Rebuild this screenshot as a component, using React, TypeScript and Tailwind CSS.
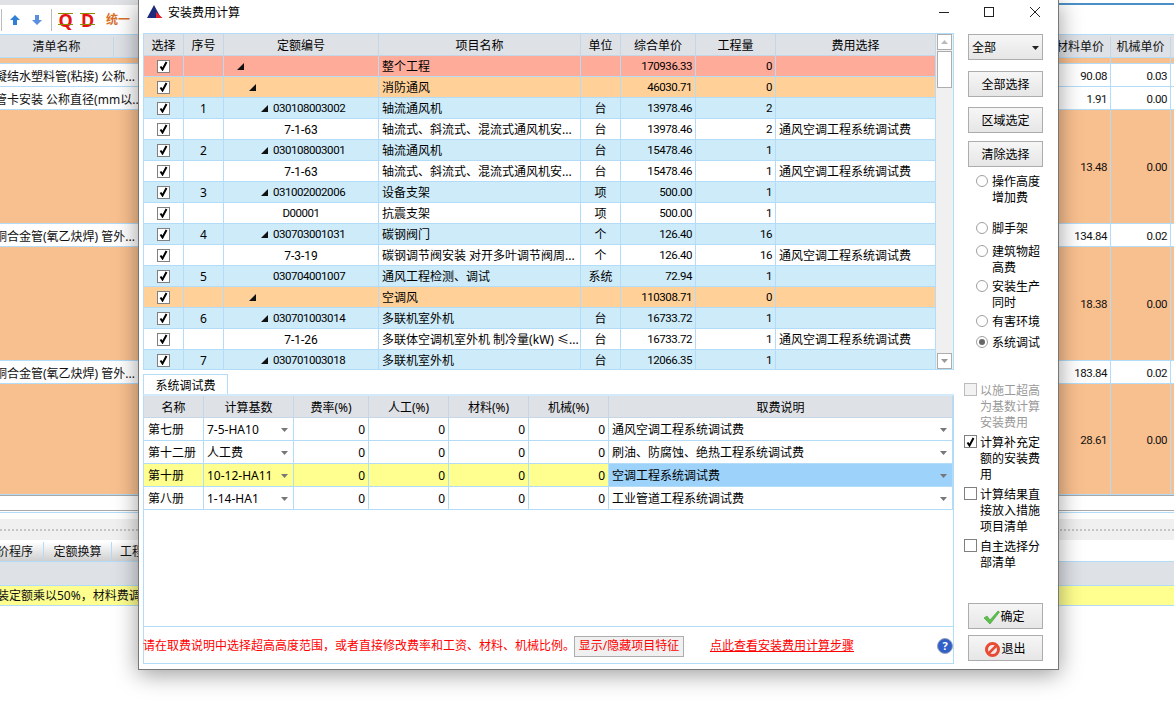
const FONT = "font-['Noto_Sans','Noto_Sans_CJK_SC',sans-serif]";
const NUM = "font-['Roboto',sans-serif] text-[11.5px] tracking-[-0.45px]";
const LEAF = "font-['Roboto',sans-serif] text-[12px]";

type TreeRow = {
  bg: string;
  no?: string;
  code?: string;
  level?: number;
  name: string;
  unit?: string;
  price: string;
  qty: string;
  fee?: string;
};

const SALMON = "bg-[#ffab9a]";
const ORANGE = "bg-[#ffd199]";
const BLUE = "bg-[#cdebf9]";
const WHITE = "bg-white";
const FEE = "通风空调工程系统调试费";

const treeRows: TreeRow[] = [
  { bg: SALMON, level: 13, name: "整个工程", price: "170936.33", qty: "0" },
  { bg: ORANGE, level: 25, name: "消防通风", price: "46030.71", qty: "0" },
  { bg: BLUE, no: "1", level: 37, code: "030108003002", name: "轴流通风机", unit: "台", price: "13978.46", qty: "2" },
  { bg: WHITE, code: "7-1-63", name: "轴流式、斜流式、混流式通风机安...", unit: "台", price: "13978.46", qty: "2", fee: FEE },
  { bg: BLUE, no: "2", level: 37, code: "030108003001", name: "轴流通风机", unit: "台", price: "15478.46", qty: "1" },
  { bg: WHITE, code: "7-1-63", name: "轴流式、斜流式、混流式通风机安...", unit: "台", price: "15478.46", qty: "1", fee: FEE },
  { bg: BLUE, no: "3", level: 37, code: "031002002006", name: "设备支架", unit: "项", price: "500.00", qty: "1" },
  { bg: WHITE, code: "D00001", name: "抗震支架", unit: "项", price: "500.00", qty: "1" },
  { bg: BLUE, no: "4", level: 37, code: "030703001031", name: "碳钢阀门", unit: "个", price: "126.40", qty: "16" },
  { bg: WHITE, code: "7-3-19", name: "碳钢调节阀安装 对开多叶调节阀周...", unit: "个", price: "126.40", qty: "16", fee: FEE },
  { bg: BLUE, no: "5", level: 0, code: "030704001007", name: "通风工程检测、调试", unit: "系统", price: "72.94", qty: "1" },
  { bg: ORANGE, level: 25, name: "空调风", price: "110308.71", qty: "0" },
  { bg: BLUE, no: "6", level: 37, code: "030701003014", name: "多联机室外机", unit: "台", price: "16733.72", qty: "1" },
  { bg: WHITE, code: "7-1-26", name: "多联体空调机室外机 制冷量(kW) ≤...", unit: "台", price: "16733.72", qty: "1", fee: FEE },
  { bg: BLUE, no: "7", level: 37, code: "030701003018", name: "多联机室外机", unit: "台", price: "12066.35", qty: "1" },
];

const feeRows = [
  { name: "第七册", base: "7-5-HA10", note: "通风空调工程系统调试费" },
  { name: "第十二册", base: "人工费", note: "刷油、防腐蚀、绝热工程系统调试费" },
  { name: "第十册", base: "10-12-HA11", note: "空调工程系统调试费", active: true },
  { name: "第八册", base: "1-14-HA1", note: "工业管道工程系统调试费" },
];

const bgRows = [
  { h: "h-[6px]", bg: "bg-[#f9c08f]" },
  { h: "h-[23px]", bg: "bg-white", name: "凝结水塑料管(粘接) 公称...", a: "90.08", b: "0.03" },
  { h: "h-[23px]", bg: "bg-white", name: "管卡安装 公称直径(mm以...", a: "1.91", b: "0.00" },
  { h: "h-[114px]", bg: "bg-[#f9c08f]", a: "13.48", b: "0.00" },
  { h: "h-[23px]", bg: "bg-white", name: "铜合金管(氧乙炔焊) 管外...", a: "134.84", b: "0.02" },
  { h: "h-[114px]", bg: "bg-[#f9c08f]", a: "18.38", b: "0.00" },
  { h: "h-[23px]", bg: "bg-white", name: "铜合金管(氧乙炔焊) 管外...", a: "183.84", b: "0.02" },
  { h: "h-[111px]", bg: "bg-[#f9c08f]", a: "28.61", b: "0.00" },
];

const Tri = () => (
  <svg width="7" height="7" viewBox="0 0 7 7" className="shrink-0">
    <polygon points="7,0 7,7 0,7" fill="#111" />
  </svg>
);

const Caret = ({ color = "#777", up = false }: { color?: string; up?: boolean }) => (
  <svg width="7" height="4" viewBox="0 0 7 4" className="shrink-0">
    <polygon points={up ? "0,4 7,4 3.5,0" : "0,0 7,0 3.5,4"} fill={color} />
  </svg>
);

const Check = ({ on = true, off = false }: { on?: boolean; off?: boolean }) => (
  <span
    className={`flex h-[13px] w-[13px] shrink-0 items-center justify-center border ${
      off ? "border-[#bcbcbc] bg-[#f2f2f2]" : "border-[#808080] bg-white"
    }`}
  >
    {on && (
      <svg width="9" height="10" viewBox="0 0 9 10">
        <path d="M1.5 5.5 L3.5 8.5 L7.5 1" fill="none" stroke="#000" strokeWidth="2" />
      </svg>
    )}
  </span>
);

const Btn = ({ children, cls = "mt-[10px]" }: { children: React.ReactNode; cls?: string }) => (
  <div
    className={`${cls} ml-[4px] flex h-[26px] w-[75px] items-center justify-center border border-[#adadad] bg-gradient-to-b from-[#f6f6f6] to-[#e6e6e6] pt-[2px] text-[12px] text-black`}
  >
    {children}
  </div>
);

const Radio = ({ label, cls, on = false }: { label: string; cls: string; on?: boolean }) => (
  <div className={`${cls} ml-[12px] flex gap-[4px] leading-[16px]`}>
    <span className="mt-[2px] flex h-[12px] w-[12px] shrink-0 items-center justify-center rounded-full border border-[#a0a0a0] bg-white">
      {on && <span className="h-[6px] w-[6px] rounded-full bg-[#666]" />}
    </span>
    <span className="w-[49px] pt-[1px]">{label}</span>
  </div>
);

const Option = ({ label, cls, on = false, off = false }: { label: string; cls: string; on?: boolean; off?: boolean }) => (
  <div className={`${cls} flex gap-[3px] leading-[16px] ${off ? "text-[#9a9a9a]" : ""}`}>
    <span className="mt-[1px]">
      <Check on={on} off={off} />
    </span>
    <span className="w-[61px] pt-[1px]">{label}</span>
  </div>
);

const Cell = ({ children, cls = "" }: { children?: React.ReactNode; cls?: string }) => (
  <div className={`flex min-w-0 items-center overflow-hidden whitespace-nowrap border-r border-b border-[#b3dcf9] pt-[2px] ${cls}`}>
    {children}
  </div>
);

const HeadCell = ({ children }: { children: React.ReactNode }) => (
  <div className="flex items-center justify-center border-r border-b border-[#c5d6e6] bg-[#dee1e6] pt-[2px]">{children}</div>
);

const Background = () => (
  <div className="flex h-full flex-col">
    <div className="flex h-[5px]">
      <div className="w-[139px] bg-[#dfe1e4]" />
      <div className="flex-1 border-b-2 border-[#4a8fc7]" />
    </div>
    <div className="flex h-[29px] items-center bg-white">
      <div className="ml-[1px] h-[22px] w-[1px] bg-[#bbb]" />
      <svg width="12" height="12" viewBox="0 0 12 12" className="ml-[7px]">
        <path d="M6 1 L11 6 H8 V11 H4 V6 H1 Z" fill="#2f7fd8" />
      </svg>
      <svg width="12" height="12" viewBox="0 0 12 12" className="ml-[10px]">
        <path d="M6 11 L1 6 H4 V1 H8 V6 H11 Z" fill="#5a8fe0" />
      </svg>
      <div className="ml-[8px] h-[22px] w-[1px] bg-[#bbb]" />
      <span className="relative ml-[6px] w-[15px] text-center text-[18px] font-bold leading-[20px] text-[#e81010]">
        Q<span className="absolute left-0 right-0 top-[3px] h-[1px] bg-[#8c8c00]" />
        <span className="absolute left-0 right-0 top-[14px] h-[1px] bg-[#8c8c00]" />
      </span>
      <span className="relative ml-[7px] w-[15px] text-center text-[18px] font-bold leading-[20px] text-[#e81010]">
        D<span className="absolute left-0 right-0 top-[3px] h-[1px] bg-[#8c8c00]" />
        <span className="absolute left-0 right-0 top-[14px] h-[1px] bg-[#8c8c00]" />
      </span>
      <span className="ml-[11px] text-[12px] font-bold text-[#d9702a]">统一</span>
    </div>
    <div className="grid h-[24px] grid-cols-[114px_1fr_53px_60px_3px] border-y border-[#b3dcf9] bg-[#dee1e6] pt-[2px] text-[12px]">
      <div className="flex items-center justify-center border-r border-[#c5d6e6]">清单名称</div>
      <div />
      <div className="flex items-center justify-end whitespace-nowrap border-r border-[#c5d6e6] pr-[6px]">材料单价</div>
      <div className="flex items-center justify-center border-r border-[#c5d6e6]">机械单价</div>
      <div />
    </div>
    {bgRows.map((r, i) => (
      <div key={i} className={`grid ${r.h} ${r.bg} grid-cols-[139px_1fr_53px_60px_3px] border-b border-[#b3dcf9] text-[12px]`}>
        <div className="flex items-center overflow-hidden whitespace-nowrap pt-[3px]">
          <span className="-ml-[5px]">{r.name}</span>
        </div>
        <div />
        <div className={`flex items-center justify-end border-x border-[#b3dcf9] pr-[3px] pt-[3px] ${NUM}`}>{r.a}</div>
        <div className={`flex items-center justify-end border-r border-[#b3dcf9] pr-[3px] pt-[3px] ${NUM}`}>{r.b}</div>
        <div />
      </div>
    ))}
    <div className="h-[15px] border-t border-[#a8a8a8] bg-white" />
    <div className="h-[2px] border-t border-[#a8a8a8] bg-white" />
    <div className="h-[7px] border-t border-[#b3dcf9] bg-white" />
    <div className="flex h-[21px] items-center bg-[#f0f0f0]">
      <div className="w-full border-t-2 border-dotted border-[#c4c4c4]" />
    </div>
    <div className="flex h-[21px] items-stretch border-t border-white pt-[1px] text-[12px]">
      <div className="flex w-[44px] items-center justify-end border-r border-[#b3dcf9] bg-gradient-to-b from-white to-[#cfcfcf] pr-[10px]">
        <span className="whitespace-nowrap">价程序</span>
      </div>
      <div className="flex w-[68px] items-center justify-center border-r border-[#b3dcf9] bg-gradient-to-b from-white to-[#cfcfcf]">
        定额换算
      </div>
      <div className="flex w-[40px] items-center justify-center whitespace-nowrap bg-gradient-to-b from-white to-[#cfcfcf]">
        工程
      </div>
      <div className="flex-1" />
    </div>
    <div className="h-[24px] border-t border-[#b3dcf9] bg-[#dee1e6]" />
    <div className="flex h-[21px] items-center overflow-hidden whitespace-nowrap border-y border-[#b3dcf9] bg-[#ffff8f] text-[12px]">
      <span className="-ml-[3px]">装定额乘以50%，材料费调整</span>
    </div>
  </div>
);

const TreeGrid = () => (
  <div className="flex h-[337px] overflow-hidden border border-[#b3dcf9]">
    <div className="w-[792px] shrink-0">
      <div className="grid h-[22px] grid-cols-[40px_40px_155px_202px_40px_75px_80px_160px]">
        {["选择", "序号", "定额编号", "项目名称", "单位", "综合单价", "工程量", "费用选择"].map((h) => (
          <HeadCell key={h}>{h}</HeadCell>
        ))}
      </div>
      {treeRows.map((r, i) => (
        <div key={i} className={`grid h-[21px] grid-cols-[40px_40px_155px_202px_40px_75px_80px_160px] ${r.bg}`}>
          <div className="flex items-center justify-center border-r border-b border-[#b3dcf9]">
            <Check />
          </div>
          <Cell cls="justify-center">{r.no}</Cell>
          {r.level === undefined ? (
            <Cell cls={`justify-center ${r.code?.includes("-") ? LEAF : NUM}`}>{r.code}</Cell>
          ) : r.level === 0 ? (
            <Cell cls={`pl-[49px] ${NUM}`}>{r.code}</Cell>
          ) : (
            <Cell cls={`${r.level === 13 ? "pl-[13px]" : r.level === 25 ? "pl-[25px]" : "pl-[37px]"} gap-[5px] ${NUM}`}>
              <span className="-mt-[2px]">
                <Tri />
              </span>
              {r.code}
            </Cell>
          )}
          <Cell cls="pl-[3px]">{r.name}</Cell>
          <Cell cls="justify-center">{r.unit}</Cell>
          <Cell cls={`justify-end pr-[3px] ${NUM}`}>{r.price}</Cell>
          <Cell cls={`justify-end pr-[3px] ${NUM}`}>{r.qty}</Cell>
          <Cell cls="pl-[3px]">{r.fee}</Cell>
        </div>
      ))}
    </div>
    <div className="flex flex-1 flex-col items-center bg-[#f0f0f0]">
      <div className="flex h-[16px] w-[15px] items-center justify-center border border-[#adadad] bg-white">
        <Caret color="#bbb" up />
      </div>
      <div className="mt-[1px] h-[37px] w-[15px] border border-[#adadad] bg-white" />
      <div className="mt-auto flex h-[16px] w-[15px] items-center justify-center border border-[#adadad] bg-white">
        <Caret color="#999" />
      </div>
    </div>
  </div>
);

const FeePanel = () => (
  <div className="flex flex-1 flex-col border-x border-b border-t-2 border-x-[#b3dcf9] border-b-[#b3dcf9] border-t-[#d3eafb]">
    <div className="grid h-[22px] grid-cols-[60px_90px_75px_80px_80px_80px_344px]">
      {["名称", "计算基数", "费率(%)", "人工(%)", "材料(%)", "机械(%)", "取费说明"].map((h) => (
        <HeadCell key={h}>{h}</HeadCell>
      ))}
    </div>
    {feeRows.map((r) => (
      <div key={r.name} className={`grid h-[23px] grid-cols-[60px_90px_75px_80px_80px_80px_344px] ${r.active ? "bg-[#ffff8f]" : "bg-white"}`}>
        <Cell cls="pl-[4px]">{r.name}</Cell>
        <Cell cls="justify-between pl-[3px] pr-[5px]">
          {r.base}
          <Caret />
        </Cell>
        <Cell cls="justify-end pr-[3px]">0</Cell>
        <Cell cls="justify-end pr-[3px]">0</Cell>
        <Cell cls="justify-end pr-[3px]">0</Cell>
        <Cell cls="justify-end pr-[3px]">0</Cell>
        <Cell cls={`justify-between pl-[3px] pr-[5px] ${r.active ? "bg-[#9dd3fb]" : ""}`}>
          {r.note}
          <Caret />
        </Cell>
      </div>
    ))}
    <div className="flex-1" />
    <div className="flex h-[37px] items-center border-t border-[#b3dcf9] pt-[2px] text-[#f00]">
      <span className="-ml-[1px] whitespace-nowrap">请在取费说明中选择超高高度范围，或者直接修改费率和工资、材料、机械比例。</span>
      <span className="-ml-[1px] flex h-[21px] w-[110px] items-center justify-center whitespace-nowrap border border-[#adadad] bg-[#f0f0f0]">
        显示/隐藏项目特征
      </span>
      <span className="ml-[26px] whitespace-nowrap underline">点此查看安装费用计算步骤</span>
      <span className="ml-[83px] flex h-[16px] w-[16px] items-center justify-center rounded-full border border-[#9aa3b5] bg-[#2f5fc8] text-[11px] font-bold text-white">
        ?
      </span>
    </div>
  </div>
);

const SidePanel = () => (
  <div className="ml-[10px] flex w-[86px] flex-col text-[12px]">
    <div className="ml-[4px] mt-[1px] flex h-[26px] w-[75px] items-center justify-between border border-[#adadad] bg-gradient-to-b from-[#f6f6f6] to-[#e6e6e6] pl-[3px] pr-[3px] pt-[2px]">
      全部
      <Caret color="#222" />
    </div>
    <Btn cls="mt-[11px]">全部选择</Btn>
    <Btn>区域选定</Btn>
    <Btn cls="mt-[8px]">清除选择</Btn>
    <Radio cls="mt-[6px]" label="操作高度增加费" />
    <Radio cls="mt-[14px]" label="脚手架" />
    <Radio cls="mt-[6px]" label="建筑物超高费" />
    <Radio cls="mt-[2px]" label="安装生产同时" />
    <Radio cls="mt-[2px]" label="有害环境" />
    <Radio cls="mt-[4px]" label="系统调试" on />
    <Option cls="mt-[31px]" label="以施工超高为基数计算安装费用" on={false} off />
    <Option cls="mt-[3px]" label="计算补充定额的安装费用" on />
    <Option cls="mt-[3px]" label="计算结果直接放入措施项目清单" />
    <Option cls="mt-[3px]" label="自主选择分部清单" />
    <Btn cls="mt-[32px]">
      <svg width="17" height="15" viewBox="0 0 17 15" className="-ml-[3px]">
        <path d="M1 8 L4 6 L7 10 L15 1 L16.5 2 L7 14 Z" fill="#5cc04a" stroke="#3d9a35" strokeWidth="0.6" />
      </svg>
      确定
    </Btn>
    <Btn cls="mt-[6px]">
      <svg width="15" height="15" viewBox="0 0 15 15" className="mr-[1px]">
        <circle cx="7.5" cy="7.5" r="6" fill="none" stroke="#ea4a33" strokeWidth="3" />
        <path d="M3.5 11.5 L11.5 3.5" stroke="#ea4a33" strokeWidth="2.5" />
      </svg>
      退出
    </Btn>
  </div>
);

const Dialog = () => (
  <div className="absolute left-[138px] top-0 flex h-[670px] w-[921px] flex-col border-x border-b border-[#777] bg-white text-[12px] text-black shadow-[0_4px_22px_rgba(0,0,0,0.4)]">
    <div className="flex h-[33px] shrink-0 items-start">
      <svg width="16" height="14" viewBox="0 0 16 14" className="ml-[8px] mt-[5px]">
        <polygon points="7,0 0,13 14,13" fill="#1f2a7a" />
        <polygon points="9,7 15.5,13 9,13" fill="#e0202a" />
      </svg>
      <span className="ml-[5px] mt-[4px]">安装费用计算</span>
      <svg width="110" height="12" viewBox="0 0 110 12" className="ml-auto mr-[17px] mt-[6px]">
        <path d="M8 6.5 H18" stroke="#222" />
        <rect x="53.5" y="1.5" width="9" height="9" fill="none" stroke="#222" />
        <path d="M99 1 L109 11 M109 1 L99 11" stroke="#222" />
      </svg>
    </div>
    <div className="flex flex-1">
      <div className="ml-[4px] flex w-[811px] shrink-0 flex-col pb-[5px]">
        <TreeGrid />
        <div className="mt-[4px] flex h-[20px] w-[85px] items-center justify-center border-x border-t border-[#b3dcf9] pt-[2px]">
          系统调试费
        </div>
        <FeePanel />
      </div>
      <SidePanel />
    </div>
  </div>
);

export default function App() {
  return (
    <div className={`relative h-[701px] w-[1174px] overflow-hidden bg-white text-[#111] ${FONT}`}>
      <Background />
      <Dialog />
    </div>
  );
}
